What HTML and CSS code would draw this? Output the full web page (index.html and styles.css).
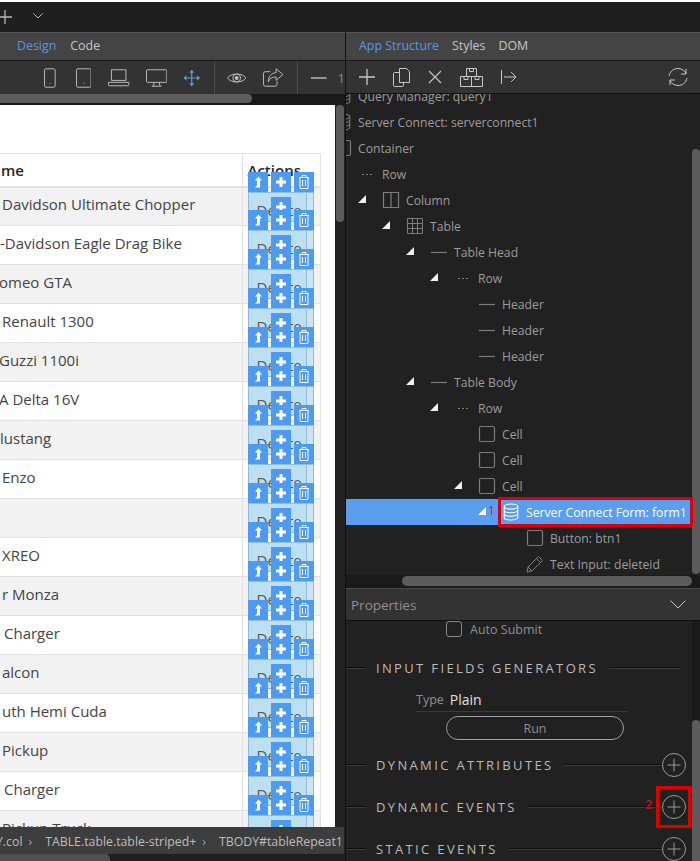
FILE: index.html
```html
<!DOCTYPE html>
<html lang="en">
<head>
    <meta charset="UTF-8">
    <meta name="viewport" content="width=device-width, initial-scale=1.0">
    <title>App Structure</title>
    <link rel="stylesheet" href="styles.css">
</head>
<body>

<svg class="sprite" xmlns="http://www.w3.org/2000/svg">
    <symbol id="i-arrow" viewBox="0 0 20 20"><path d="M10.500 4.500L14 8.500h-2v7H7l2-2v-5H7z" fill="#fff"/></symbol>
    <symbol id="i-plus" viewBox="0 0 20 20"><path d="M8.500 5h3v3.500H15v3h-3.500V15h-3v-3.500H5v-3h3.500z" fill="#fff"/></symbol>
    <symbol id="i-trash" viewBox="0 0 20 20"><path d="M5 5.500h10M8 5.500v-2h4v2M6 5.500v11h8v-11M8.500 8v6M11.500 8v6" fill="none" stroke="#fff"/></symbol>
    <symbol id="i-copy" viewBox="0 0 20 20"><path d="M7.500 3.500h9v10h-9zM3.500 7.500h4M3.500 7.500v9h10v-3" fill="none" stroke="#fff"/></symbol>
    <symbol id="i-db" viewBox="0 0 20 20"><ellipse cx="10" cy="4" rx="7.500" ry="2.800" fill="none" stroke="currentColor" stroke-width="1.200"/><path d="M2.500 4v12c0 1.500 3.400 2.800 7.500 2.800s7.500-1.300 7.500-2.800V4M2.500 8c0 1.500 3.400 2.800 7.500 2.800s7.500-1.300 7.500-2.800M2.500 12c0 1.500 3.400 2.800 7.500 2.800s7.500-1.300 7.500-2.800" fill="none" stroke="currentColor" stroke-width="1.200"/></symbol>
    <symbol id="i-box" viewBox="0 0 18 18"><rect x="1.500" y="1.500" width="15" height="15" rx="1.500" fill="none" stroke="currentColor" stroke-width="1.200"/></symbol>
    <symbol id="i-dash" viewBox="0 0 18 18"><path d="M1 9.500h16" stroke="currentColor" stroke-width="1.200"/></symbol>
    <symbol id="i-dots" viewBox="0 0 18 18"><path d="M4 9.500h2M8 9.500h2M12 9.500h2" stroke="currentColor" stroke-width="1.200"/></symbol>
    <symbol id="i-circle-plus" viewBox="0 0 24 24"><circle cx="12" cy="12" r="11.500" fill="none" stroke="#9a9a9a"/><path d="M12 5.500v13M5.500 12h13" stroke="#9a9a9a"/></symbol>
</svg>

<div class="title-bar">
    <svg class="title-plus" width="16" height="16" viewBox="0 0 16 16"><path d="M8 1v14M1 8h14" stroke="#b8b8b8" stroke-width="1.300"/></svg>
    <svg class="title-chevron" width="10" height="6" viewBox="0 0 10 6"><path d="M.5.500L5 5 9.500.500" fill="none" stroke="#b8b8b8"/></svg>
</div>

<div class="workspace">
    <section class="design-pane">
        <nav class="tabs design-tabs">
            <span class="tab active">Design</span>
            <span class="tab">Code</span>
        </nav>
        <div class="toolbar device-bar">
            <svg class="dev phone" width="12" height="20" viewBox="0 0 12 20"><rect x=".5" y=".5" width="11" height="19" rx="1.500" fill="none" stroke="#bdbdbd"/><path d="M5.500 15.500h1" stroke="#bdbdbd"/></svg>
            <svg class="dev tablet" width="16" height="20" viewBox="0 0 16 20"><rect x=".5" y=".5" width="15" height="19" rx="1.500" fill="none" stroke="#bdbdbd"/><path d="M7.500 15.500h1" stroke="#bdbdbd"/></svg>
            <svg class="dev laptop" width="22" height="18" viewBox="0 0 22 18"><path d="M3.500 11.500v-11h15v11zM.5 13.500h21v2.500a1 1 0 0 1-1 1h-19a1 1 0 0 1-1-1z" fill="none" stroke="#bdbdbd"/></svg>
            <svg class="dev desktop" width="22" height="18" viewBox="0 0 22 18"><path d="M1.500.5h19a1 1 0 0 1 1 1v11a1 1 0 0 1-1 1h-19a1 1 0 0 1-1-1v-11a1 1 0 0 1 1-1zM8.500 13.500l-1 4M13.500 13.500l1 4M6 17.500h10" fill="none" stroke="#bdbdbd"/></svg>
            <svg class="dev move" width="18" height="18" viewBox="0 0 18 18"><path d="M9 1v16M1 9h16" stroke="#5a9fe8" stroke-width="1.200"/><path d="M6.500 3.500L9 .5l2.500 3zM6.500 14.500L9 17.500l2.500-3zM3.500 6.500L.5 9l3 2.500zM14.500 6.500L17.500 9l-3 2.500z" fill="#5a9fe8"/></svg>
            <span class="tool-sep first-sep"></span>
            <svg class="dev eye" width="20" height="14" viewBox="0 0 20 14"><path d="M.5 7C4 1.500 16 1.500 19.500 7 16 12.500 4 12.500.5 7z" fill="none" stroke="#bdbdbd"/><circle cx="10" cy="7" r="4" fill="none" stroke="#bdbdbd"/><circle cx="10" cy="7" r="2" fill="#bdbdbd"/></svg>
            <svg class="dev share" width="21" height="19" viewBox="0 0 21 19"><path d="M7.500 3.500h-5a2 2 0 0 0-2 2v11a2 2 0 0 0 2 2h10a2 2 0 0 0 2-2v-3" fill="none" stroke="#bdbdbd"/><path d="M13.500.5l7 6-7 6V9C9 9 6.500 10.500 5.500 14c0-6 3-9 8-9.500z" fill="none" stroke="#bdbdbd"/></svg>
            <span class="tool-sep"></span>
            <svg class="dev minus" width="16" height="2" viewBox="0 0 16 2"><path d="M0 1h16" stroke="#bdbdbd" stroke-width="1.500"/></svg>
            <span class="zoom-num">1</span>
        </div>
        <div class="h-scroll design-scroll"><span class="thumb"></span></div>
        <div class="canvas-wrap">
            <div class="canvas">
                <table class="grid">
                    <colgroup><col class="col-name"><col class="col-actions"></colgroup>
                    <thead><tr><th>me</th><th class="th-actions">Actions</th></tr></thead>
                    <tbody>
                        <tr><td class="name">Davidson Ultimate Chopper</td><td class="act"><span class="del">Delete</span><span class="tb"><i><svg><use href="#i-arrow"/></svg></i><i><svg><use href="#i-plus"/></svg></i><i><svg><use href="#i-trash"/></svg></i></span><i class="plus-2"><svg><use href="#i-plus"/></svg></i><i class="under-plus"><svg><use href="#i-plus"/></svg></i><i class="under-copy"><svg><use href="#i-copy"/></svg></i></td></tr>
                        <tr><td class="name at-0">-Davidson Eagle Drag Bike</td><td class="act"><span class="del">Delete</span><span class="tb"><i><svg><use href="#i-arrow"/></svg></i><i><svg><use href="#i-plus"/></svg></i><i><svg><use href="#i-trash"/></svg></i></span><i class="plus-2"><svg><use href="#i-plus"/></svg></i><i class="under-plus"><svg><use href="#i-plus"/></svg></i><i class="under-copy"><svg><use href="#i-copy"/></svg></i></td></tr>
                        <tr><td class="name at-neg">omeo GTA</td><td class="act"><span class="del">Delete</span><span class="tb"><i><svg><use href="#i-arrow"/></svg></i><i><svg><use href="#i-plus"/></svg></i><i><svg><use href="#i-trash"/></svg></i></span><i class="plus-2"><svg><use href="#i-plus"/></svg></i><i class="under-plus"><svg><use href="#i-plus"/></svg></i><i class="under-copy"><svg><use href="#i-copy"/></svg></i></td></tr>
                        <tr><td class="name">Renault 1300</td><td class="act"><span class="del">Delete</span><span class="tb"><i><svg><use href="#i-arrow"/></svg></i><i><svg><use href="#i-plus"/></svg></i><i><svg><use href="#i-trash"/></svg></i></span><i class="plus-2"><svg><use href="#i-plus"/></svg></i><i class="under-plus"><svg><use href="#i-plus"/></svg></i><i class="under-copy"><svg><use href="#i-copy"/></svg></i></td></tr>
                        <tr><td class="name at-neg">Guzzi 1100i</td><td class="act"><span class="del">Delete</span><span class="tb"><i><svg><use href="#i-arrow"/></svg></i><i><svg><use href="#i-plus"/></svg></i><i><svg><use href="#i-trash"/></svg></i></span><i class="plus-2"><svg><use href="#i-plus"/></svg></i><i class="under-plus"><svg><use href="#i-plus"/></svg></i><i class="under-copy"><svg><use href="#i-copy"/></svg></i></td></tr>
                        <tr><td class="name at-neg">A Delta 16V</td><td class="act"><span class="del">Delete</span><span class="tb"><i><svg><use href="#i-arrow"/></svg></i><i><svg><use href="#i-plus"/></svg></i><i><svg><use href="#i-trash"/></svg></i></span><i class="plus-2"><svg><use href="#i-plus"/></svg></i><i class="under-plus"><svg><use href="#i-plus"/></svg></i><i class="under-copy"><svg><use href="#i-copy"/></svg></i></td></tr>
                        <tr><td class="name at-0">lustang</td><td class="act"><span class="del">Delete</span><span class="tb"><i><svg><use href="#i-arrow"/></svg></i><i><svg><use href="#i-plus"/></svg></i><i><svg><use href="#i-trash"/></svg></i></span><i class="plus-2"><svg><use href="#i-plus"/></svg></i><i class="under-plus"><svg><use href="#i-plus"/></svg></i><i class="under-copy"><svg><use href="#i-copy"/></svg></i></td></tr>
                        <tr><td class="name">Enzo</td><td class="act"><span class="del">Delete</span><span class="tb"><i><svg><use href="#i-arrow"/></svg></i><i><svg><use href="#i-plus"/></svg></i><i><svg><use href="#i-trash"/></svg></i></span><i class="plus-2"><svg><use href="#i-plus"/></svg></i><i class="under-plus"><svg><use href="#i-plus"/></svg></i><i class="under-copy"><svg><use href="#i-copy"/></svg></i></td></tr>
                        <tr><td class="name"></td><td class="act"><span class="del">Delete</span><span class="tb"><i><svg><use href="#i-arrow"/></svg></i><i><svg><use href="#i-plus"/></svg></i><i><svg><use href="#i-trash"/></svg></i></span><i class="plus-2"><svg><use href="#i-plus"/></svg></i><i class="under-plus"><svg><use href="#i-plus"/></svg></i><i class="under-copy"><svg><use href="#i-copy"/></svg></i></td></tr>
                        <tr><td class="name">XREO</td><td class="act"><span class="del">Delete</span><span class="tb"><i><svg><use href="#i-arrow"/></svg></i><i><svg><use href="#i-plus"/></svg></i><i><svg><use href="#i-trash"/></svg></i></span><i class="plus-2"><svg><use href="#i-plus"/></svg></i><i class="under-plus"><svg><use href="#i-plus"/></svg></i><i class="under-copy"><svg><use href="#i-copy"/></svg></i></td></tr>
                        <tr><td class="name">r Monza</td><td class="act"><span class="del">Delete</span><span class="tb"><i><svg><use href="#i-arrow"/></svg></i><i><svg><use href="#i-plus"/></svg></i><i><svg><use href="#i-trash"/></svg></i></span><i class="plus-2"><svg><use href="#i-plus"/></svg></i><i class="under-plus"><svg><use href="#i-plus"/></svg></i><i class="under-copy"><svg><use href="#i-copy"/></svg></i></td></tr>
                        <tr><td class="name at-4">Charger</td><td class="act"><span class="del">Delete</span><span class="tb"><i><svg><use href="#i-arrow"/></svg></i><i><svg><use href="#i-plus"/></svg></i><i><svg><use href="#i-trash"/></svg></i></span><i class="plus-2"><svg><use href="#i-plus"/></svg></i><i class="under-plus"><svg><use href="#i-plus"/></svg></i><i class="under-copy"><svg><use href="#i-copy"/></svg></i></td></tr>
                        <tr><td class="name">alcon</td><td class="act"><span class="del">Delete</span><span class="tb"><i><svg><use href="#i-arrow"/></svg></i><i><svg><use href="#i-plus"/></svg></i><i><svg><use href="#i-trash"/></svg></i></span><i class="plus-2"><svg><use href="#i-plus"/></svg></i><i class="under-plus"><svg><use href="#i-plus"/></svg></i><i class="under-copy"><svg><use href="#i-copy"/></svg></i></td></tr>
                        <tr><td class="name">uth Hemi Cuda</td><td class="act"><span class="del">Delete</span><span class="tb"><i><svg><use href="#i-arrow"/></svg></i><i><svg><use href="#i-plus"/></svg></i><i><svg><use href="#i-trash"/></svg></i></span><i class="plus-2"><svg><use href="#i-plus"/></svg></i><i class="under-plus"><svg><use href="#i-plus"/></svg></i><i class="under-copy"><svg><use href="#i-copy"/></svg></i></td></tr>
                        <tr><td class="name">Pickup</td><td class="act"><span class="del">Delete</span><span class="tb"><i><svg><use href="#i-arrow"/></svg></i><i><svg><use href="#i-plus"/></svg></i><i><svg><use href="#i-trash"/></svg></i></span><i class="plus-2"><svg><use href="#i-plus"/></svg></i><i class="under-plus"><svg><use href="#i-plus"/></svg></i><i class="under-copy"><svg><use href="#i-copy"/></svg></i></td></tr>
                        <tr><td class="name at-4">Charger</td><td class="act"><span class="del">Delete</span><span class="tb"><i><svg><use href="#i-arrow"/></svg></i><i><svg><use href="#i-plus"/></svg></i><i><svg><use href="#i-trash"/></svg></i></span><i class="plus-2"><svg><use href="#i-plus"/></svg></i><i class="under-plus"><svg><use href="#i-plus"/></svg></i><i class="under-copy"><svg><use href="#i-copy"/></svg></i></td></tr>
                        <tr><td class="name">Pickup Truck</td><td class="act"><span class="del">Delete</span><span class="tb"><i><svg><use href="#i-arrow"/></svg></i><i><svg><use href="#i-plus"/></svg></i><i><svg><use href="#i-trash"/></svg></i></span><i class="plus-2"><svg><use href="#i-plus"/></svg></i><i class="under-plus"><svg><use href="#i-plus"/></svg></i><i class="under-copy"><svg><use href="#i-copy"/></svg></i></td></tr>
                    </tbody>
                </table>
            </div>
            <div class="v-scroll canvas-scroll"><span class="thumb"></span></div>
            <div class="crumbs">
                <span class="crumb-first">Y.col</span><b>&#8250;</b><span>TABLE.table.table-striped+</span><b>&#8250;</b><span>TBODY#tableRepeat1</span>
            </div>
            <div class="h-scroll crumb-scroll"><span class="thumb"></span></div>
        </div>
    </section>

    <section class="side-pane">
        <nav class="tabs side-tabs">
            <span class="tab active">App Structure</span>
            <span class="tab">Styles</span>
            <span class="tab">DOM</span>
        </nav>
        <div class="toolbar side-bar">
            <svg width="16" height="16" viewBox="0 0 16 16"><path d="M8 0v16M0 8h16" stroke="#c8c8c8" stroke-width="1.300"/></svg>
            <svg width="17" height="19" viewBox="0 0 17 19"><path d="M6.500.5h7l3 3v11h-10zM6.500 4.500h-5a1 1 0 0 0-1 1v12a1 1 0 0 0 1 1h8a1 1 0 0 0 1-1v-3" fill="none" stroke="#c8c8c8"/></svg>
            <svg width="14" height="14" viewBox="0 0 14 14"><path d="M1 1l12 12M13 1L1 13" stroke="#c8c8c8" stroke-width="1.100"/></svg>
            <svg width="23" height="19" viewBox="0 0 23 19"><path d="M6.500.5h10v8h-10zM.5 8.500h11v10H.5zM11.500 8.500h11v10h-11zM9.500.5v3h4v-3M4 8.500v3h4v-3M15 8.500v3h4v-3" fill="none" stroke="#c8c8c8"/></svg>
            <svg width="16" height="14" viewBox="0 0 16 14"><path d="M.5 0v14M3 7h12M10 2l5 5-5 5" fill="none" stroke="#c8c8c8"/></svg>
            <svg class="refresh" width="20" height="18" viewBox="0 0 20 18"><path d="M1 8C2 3 6 .5 10 .5s7 2.500 8 5M19 10c-1 5-5 7.500-9 7.500s-7-2.500-8-5M18 1v5h-5M2 17v-5h5" fill="none" stroke="#c8c8c8"/></svg>
        </div>

        <div class="tree-wrap">
            <div class="tree">
                <div class="node lvl-a clipped"><u></u><svg class="ic"><use href="#i-db"/></svg><span>Query Manager: query1</span></div>
                <div class="node lvl-a"><u></u><svg class="ic"><use href="#i-db"/></svg><span>Server Connect: serverconnect1</span></div>
                <div class="node lvl-a"><u></u><svg class="ic"><use href="#i-box"/></svg><span>Container</span></div>
                <div class="node lvl-b"><u></u><svg class="ic"><use href="#i-dots"/></svg><span>Row</span></div>
                <div class="node lvl-0"><u class="open"></u><svg class="ic" viewBox="0 0 18 18"><path d="M1.500 1.500h15v15h-15zM9 1.500v15" fill="none" stroke="currentColor" stroke-width="1.200"/></svg><span>Column</span></div>
                <div class="node lvl-1"><u class="open"></u><svg class="ic" viewBox="0 0 18 18"><path d="M1.500 1.500h15v15h-15zM1.500 6.500h15M1.500 11.500h15M6.500 1.500v15M11.500 1.500v15" fill="none" stroke="currentColor"/></svg><span>Table</span></div>
                <div class="node lvl-2"><u class="open"></u><svg class="ic"><use href="#i-dash"/></svg><span>Table Head</span></div>
                <div class="node lvl-3"><u class="open"></u><svg class="ic"><use href="#i-dots"/></svg><span>Row</span></div>
                <div class="node lvl-4"><u></u><svg class="ic"><use href="#i-dash"/></svg><span>Header</span></div>
                <div class="node lvl-4"><u></u><svg class="ic"><use href="#i-dash"/></svg><span>Header</span></div>
                <div class="node lvl-4"><u></u><svg class="ic"><use href="#i-dash"/></svg><span>Header</span></div>
                <div class="node lvl-2"><u class="open"></u><svg class="ic"><use href="#i-dash"/></svg><span>Table Body</span></div>
                <div class="node lvl-3"><u class="open"></u><svg class="ic"><use href="#i-dots"/></svg><span>Row</span></div>
                <div class="node lvl-4"><u></u><svg class="ic"><use href="#i-box"/></svg><span>Cell</span></div>
                <div class="node lvl-4"><u></u><svg class="ic"><use href="#i-box"/></svg><span>Cell</span></div>
                <div class="node lvl-4"><u class="open"></u><svg class="ic"><use href="#i-box"/></svg><span>Cell</span></div>
                <div class="node lvl-5 selected"><u class="open"></u><svg class="ic"><use href="#i-db"/></svg><span>Server Connect Form: form1</span><em class="mark-num one">1</em><span class="mark mark-form"></span></div>
                <div class="node lvl-6"><u></u><svg class="ic"><use href="#i-box"/></svg><span>Button: btn1</span></div>
                <div class="node lvl-6"><u></u><svg class="ic" viewBox="0 0 18 18"><path d="M1 17l1-5L12.500 1.500l4 4L6 16zM2 12l4 4M10.500 3.500l4 4" fill="none" stroke="currentColor"/></svg><span>Text Input: deleteid</span></div>
            </div>
            <div class="v-scroll tree-scroll"><span class="thumb"></span></div>
        </div>
        <div class="h-scroll tree-hscroll"><span class="thumb"></span></div>

        <div class="props-head">
            <span>Properties</span>
            <svg width="16" height="9" viewBox="0 0 16 9"><path d="M.5.500L8 8 15.500.500" fill="none" stroke="#c8c8c8"/></svg>
        </div>

        <div class="props">
            <div class="props-body">
                <label class="check-row"><span class="check"></span>Auto Submit</label>
                <div class="section gen-section"><span class="rule lead"></span><h3>Input Fields Generators</h3><span class="rule"></span><span class="gen-end"></span></div>
                <div class="type-row"><label>Type</label><span class="type-val">Plain</span></div>
                <div class="run-row"><button>Run</button></div>
                <div class="section attr-section"><span class="rule lead"></span><h3>Dynamic Attributes</h3><span class="rule"></span><svg class="add"><use href="#i-circle-plus"/></svg></div>
                <div class="section"><span class="rule lead"></span><h3>Dynamic Events</h3><span class="rule"></span><svg class="add"><use href="#i-circle-plus"/></svg><em class="mark-num two">2</em><span class="mark mark-add"></span></div>
                <div class="section"><span class="rule lead"></span><h3>Static Events</h3><span class="rule"></span><svg class="add"><use href="#i-circle-plus"/></svg></div>
            </div>
            <div class="v-scroll props-scroll"><span class="thumb"></span></div>
        </div>
    </section>
</div>

</body>
</html>
```

FILE: styles.css
```css
html, body {
    margin: 0;
    padding: 0;
    height: 100%;
    overflow: hidden;
}
body {
    background: #fff;
    padding-top: 2px;
    box-sizing: border-box;
    font-family: 'Open Sans', 'Noto Sans', sans-serif;
    font-size: 12.5px;
    color: #a8a8a8;
}
.sprite {
    position: absolute;
    width: 0;
    height: 0;
}
.title-bar {
    height: 30px;
    background: #1f1f1f;
    display: flex;
    align-items: center;
}
.title-plus {
    margin-left: -3px;
    margin-top: -1px;
}
.title-chevron {
    margin-left: 20px;
    margin-top: -2px;
}
.workspace {
    display: grid;
    grid-template-columns: 346px 354px;
    height: 829px;
    background: #1a1a1a;
}
.design-pane, .side-pane {
    display: flex;
    flex-direction: column;
    min-width: 0;
    height: 829px;
}
.design-pane {
    border-right: 1px solid #111;
    box-sizing: border-box;
}

/* tabs + toolbars */
.tabs {
    height: 24px;
    background: #444;
    border-top: 1px solid #555;
    border-bottom: 1px solid #161616;
    display: flex;
    align-items: center;
    flex: none;
    padding-bottom: 3px;
}
.tabs .tab + .tab { margin-left: 14px; }
.design-tabs { padding-left: 17px; }
.side-tabs { padding-left: 13px; }
.side-tabs .tab + .tab { margin-left: 13px; }
.tab {
    color: #c6c6c6;
    font-size: 12.4px;
}
.tab.active { color: #5a96e6; }
.toolbar {
    height: 33px;
    background: #333;
    display: flex;
    align-items: center;
    flex: none;
}
.device-bar { padding-left: 44px; }
.device-bar .tablet { margin-left: 20px; }
.device-bar .laptop { margin-left: 17px; }
.device-bar .desktop { margin-left: 16px; }
.device-bar .move { margin-left: 16px; }
.device-bar .eye { margin-left: 12px; }
.device-bar .share { margin-left: 16px; }
.device-bar .minus { margin-left: 13px; }
.tool-sep {
    width: 1px;
    height: 33px;
    background: #4c4c4c;
    margin-left: 14px;
}
.zoom-num {
    margin-left: 11px;
    color: #888;
    font-size: 13px;
}
.side-bar {
    padding-left: 13px;
    gap: 18px;
    border-bottom: 1px solid #111;
    box-sizing: border-box;
}
.side-bar .refresh { margin-left: auto; margin-right: 12px; }

/* scrollbars */
.h-scroll {
    flex: none;
    height: 10px;
    background: #1a1a1a;
    position: relative;
}
.h-scroll .thumb, .v-scroll .thumb {
    display: block;
    background: #5c5c5c;
    border-radius: 5px;
}
.h-scroll .thumb { height: 9px; }
.design-scroll .thumb {
    width: 262px;
    margin-left: -10px;
}
.design-scroll { height: 11px; overflow: hidden; }
.crumb-scroll {
    height: 7px;
    overflow: hidden;
    background: #202020;
    grid-column: 1 / 3;
}
.crumb-scroll .thumb {
    width: 118px;
    margin-left: -8px;
    border-radius: 0 5px 0 0;
    background: #505050;
}
.v-scroll {
    width: 10px;
    flex: none;
    background: #222;
}
.v-scroll .thumb { width: 8px; margin-left: 1px; }

/* design canvas */
.canvas-wrap {
    flex: 1;
    min-height: 0;
    display: grid;
    grid-template-columns: 335px 10px;
    grid-template-rows: 1fr 27px 7px;
    background: #222;
}
.canvas {
    background: #fff;
    overflow: hidden;
    padding-top: 48px;
    color: #333;
    font-size: 15px;
    min-height: 0;
}
.canvas-scroll .thumb { height: 117px; }
.crumbs {
    grid-column: 1 / 3;
    background: #3d3d3d;
    color: #bdbdbd;
    display: flex;
    align-items: center;
    gap: 6px;
    white-space: nowrap;
    font-size: 12.3px;
    margin-right: 1px;
    overflow: hidden;
    padding-top: 2px;
    box-sizing: border-box;
}
.crumb-first { margin-left: -4px; }
.crumbs b {
    font-weight: normal;
    margin-right: 7px;
    color: #aaa;
}
.grid {
    width: 320px;
    table-layout: fixed;
    border-collapse: collapse;
}
.col-name { width: 242px; }
.col-actions { width: 78px; }
.grid th {
    height: 33px;
    text-align: left;
    border: 1px solid #dee2e6;
    border-left: 0;
    border-bottom-width: 2px;
    padding: 0 0 0 1px;
    color: #212529;
    font-weight: 600;
    box-sizing: border-box;
}
.grid .th-actions { padding-left: 5px; }
.grid td {
    height: 39px;
    padding: 0;
    border-top: 1px solid #dee2e6;
    border-right: 1px solid #dee2e6;
    box-sizing: border-box;
}
.grid tbody tr:nth-child(odd) { background: #f2f2f2; }
.grid .name {
    padding-left: 2px;
    padding-bottom: 4px;
    color: #444;
    white-space: nowrap;
}
.grid .name.at-0 { padding-left: 0; }
.grid .name.at-4 { padding-left: 4px; }
.grid .name.at-neg { padding-left: 0; text-indent: -1px; }

/* builder overlays on the action cell */
.act { position: relative; }
.del {
    position: absolute;
    left: 5px;
    top: 4px;
    width: 66px;
    height: 30px;
    background: #bddff2;
    border: 1px solid #8fbddb;
    box-sizing: border-box;
    color: #555;
    padding: 7px 0 0 8px;
    font-size: 15px;
    line-height: 20px;
    overflow: hidden;
}
.del::after {
    content: '';
    position: absolute;
    right: 0;
    top: 0;
    bottom: 0;
    width: 6px;
    background: #cfe3ee;
    border-left: 1px solid #8fbddb;
}
.tb {
    position: absolute;
    left: 5px;
    top: -16px;
    display: flex;
    gap: 3px;
}
.tb i, .plus-2, .under-plus, .under-copy {
    display: block;
    width: 20px;
    height: 20px;
    background: #4e9af1;
}
.act svg {
    width: 20px;
    height: 20px;
    display: block;
}
.plus-2, .under-plus, .under-copy { position: absolute; }
.plus-2 { left: 28px; top: 9px; }
.under-plus { left: 28px; top: 33px; background: #6aaaf3; }
.under-copy { left: 51px; top: 33px; background: #74b0f4; }

/* tree */
.tree-wrap {
    flex: 1;
    min-height: 0;
    display: flex;
    background: #212121;
    overflow: hidden;
}
.tree {
    flex: 1;
    min-width: 0;
    font-size: 12.2px;
}
.node {
    height: 26px;
    display: flex;
    align-items: center;
    color: #9c9c9c;
    white-space: nowrap;
    position: relative;
}
.node.clipped { margin-top: -11px; }
.node u {
    width: 24px;
    flex: none;
    text-decoration: none;
    display: block;
}
.node u.open::before {
    content: '';
    display: block;
    width: 0;
    height: 0;
    border-style: solid;
    border-width: 0 0 8px 8px;
    border-color: transparent transparent #f0f0f0 transparent;
    margin-bottom: 3px;
}
.ic {
    width: 18px;
    height: 18px;
    flex: none;
    margin-right: 6px;
    color: #7c7c7c;
}
.lvl-a { margin-left: -36px; }
.lvl-b { margin-left: -12px; }
.lvl-0 { padding-left: 12px; }
.lvl-1 { padding-left: 36px; }
.lvl-2 { padding-left: 60px; }
.lvl-3 { padding-left: 84px; }
.lvl-4 { padding-left: 108px; }
.lvl-5 { padding-left: 132px; }
.lvl-6 { padding-left: 156px; }
.selected {
    background: #5b9ef0;
    color: #fff;
}
.selected .ic { color: #fff; }
.selected u.open::before { border-color: transparent transparent #fff transparent; }
.mark {
    position: absolute;
    border: 3px solid #d8000c;
    box-sizing: border-box;
}
.mark-form {
    left: 152px;
    top: -2px;
    width: 195px;
    height: 30px;
}
.mark-num {
    position: absolute;
    font-style: normal;
    color: #d0102a;
    font-size: 12px;
}
.mark-num.one { left: 142px; top: 3px; }
.tree-scroll { width: 8px; }
.tree-scroll .thumb { height: 425px; margin: 55px 0 0; }
.tree-hscroll { height: 13px; padding-top: 1px; box-sizing: border-box; }
.tree-hscroll .thumb { width: 290px; margin-left: 56px; height: 10px; }

/* properties */
.props-head {
    height: 33px;
    flex: none;
    background: #333;
    border-top: 1px solid #4a4a4a;
    border-bottom: 1px solid #111;
    box-sizing: border-box;
    display: flex;
    align-items: center;
    justify-content: space-between;
    padding: 0 14px 0 5px;
    color: #8f8f8f;
    font-size: 13.5px;
}
.props {
    height: 240px;
    flex: none;
    display: flex;
    background: #212121;
    overflow: hidden;
}
.props-body { flex: 1; min-width: 0; }
.check-row {
    display: flex;
    align-items: center;
    padding-left: 100px;
    height: 16px;
    gap: 8px;
    color: #8f8f8f;
}
.check {
    width: 14px;
    height: 14px;
    border: 1px solid #8a8a8a;
    border-radius: 3px;
}
.section {
    display: flex;
    align-items: center;
    height: 24px;
    position: relative;
    padding-right: 6px;
}
.section h3 {
    margin: 0 11px 0 10px;
    font-weight: 400;
    font-size: 13px;
    letter-spacing: 2.35px;
    text-transform: uppercase;
    color: #bababa;
    white-space: nowrap;
}
.rule {
    flex: 1;
    height: 1px;
    background: #0c0c0c;
    border-bottom: 1px solid #3c3c3c;
}
.rule.lead {
    flex: none;
    width: 20px;
}
.gen-section { margin-top: 19px; }
.gen-end { width: 5px; flex: none; }
.attr-section { margin-top: 13px; }
.section + .section { margin-top: 18px; }
.add {
    width: 24px;
    height: 24px;
    flex: none;
}
.type-row {
    display: flex;
    align-items: center;
    margin: 8px 0 0 70px;
    height: 24px;
    width: 212px;
    gap: 6px;
    border-bottom: 1px solid #3a3a3a;
    box-sizing: border-box;
}
.type-row label { color: #8f8f8f; }
.type-val { color: #e0e0e0; font-size: 14px; }
.run-row { padding-left: 100px; margin-top: 4px; }
.run-row button {
    display: block;
    width: 178px;
    height: 24px;
    border: 1px solid #a0a0a0;
    border-radius: 12px;
    background: transparent;
    color: #8f8f8f;
    font: inherit;
    padding: 0;
}
.mark-add {
    right: 1px;
    top: -9px;
    width: 35px;
    height: 42px;
    border-color: #e00000;
}
.mark-num.two {
    right: 40px;
    top: 1px;
    font-weight: 700;
    color: #b81414;
}
.props-scroll { width: 8px; background: #1a1a1a; }
.props-scroll .thumb { margin: 99px 0 0; height: 150px; }
```
